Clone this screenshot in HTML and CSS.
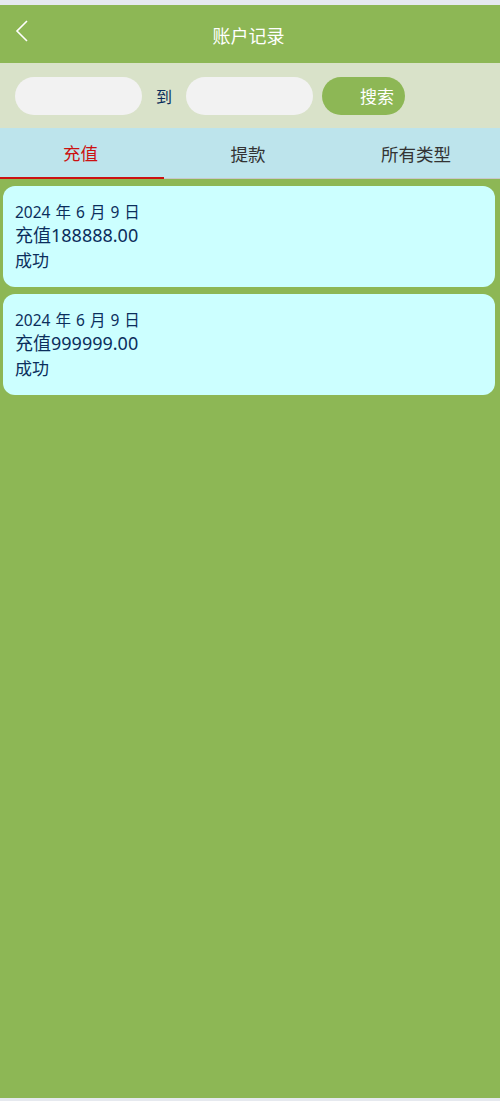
FILE: index.html
```html
<!DOCTYPE html>
<html lang="zh">
<head>
    <meta charset="UTF-8">
    <meta name="viewport" content="width=device-width, initial-scale=1.0">
    <title>账户记录</title>
    <link rel="stylesheet" href="styles.css">
</head>
<body>
    <div class="page">
        <div class="header">
            <span class="back">
                <svg width="14" height="24" viewBox="0 0 14 24"><path d="M12 2 L2 12 L12 22" fill="none" stroke="#fff" stroke-width="1.6"/></svg>
            </span>
            <h1>账户记录</h1>
        </div>

        <div class="filter">
            <input type="text" class="date-input">
            <span class="to">到</span>
            <input type="text" class="date-input">
            <button class="search-btn">搜索</button>
        </div>

        <div class="tabs">
            <div class="tab active">充值</div>
            <div class="tab">提款</div>
            <div class="tab">所有类型</div>
        </div>

        <div class="list">
            <div class="record">
                <div class="date">2024 年 6 月 9 日</div>
                <div class="amount">充值188888.00</div>
                <div class="status">成功</div>
            </div>
            <div class="record">
                <div class="date">2024 年 6 月 9 日</div>
                <div class="amount">充值999999.00</div>
                <div class="status">成功</div>
            </div>
        </div>
    </div>
</body>
</html>
```

FILE: styles.css
```css
html {
    background-color: #e6e9ef;
}

body {
    margin: 0;
    padding: 5px 0 0;
    font-family: "Noto Sans", "Noto Sans CJK SC", sans-serif;
}

.page {
    background-color: #8db755;
    min-height: 1093px;
}

.header {
    height: 58px;
    position: relative;
    display: flex;
    align-items: center;
    justify-content: center;
}

.header h1 {
    margin: 0 0 0 -3px;
    color: #fff;
    font-size: 18px;
    font-weight: normal;
    position: relative;
    top: 1px;
}

.back {
    position: absolute;
    left: 15px;
    top: 14px;
}

.filter {
    background-color: #d9e2c9;
    height: 65px;
    display: flex;
    align-items: center;
    padding: 0 15px;
    box-sizing: border-box;
}

.date-input {
    width: 127px;
    height: 38px;
    border: none;
    border-radius: 19px;
    background-color: #f2f2f2;
    outline: none;
    padding: 0;
}

.to {
    color: #0b2e5c;
    font-size: 16px;
    width: 44px;
    text-align: center;
}

.search-btn {
    margin-left: 9px;
    width: 83px;
    height: 38px;
    border: none;
    border-radius: 19px;
    background-color: #8db755;
    color: #fff;
    font-size: 17px;
    font-family: inherit;
    padding: 0 0 0 38px;
    text-align: left;
}

.tabs {
    display: flex;
    background-color: #bde4ec;
    height: 51px;
}

.tab {
    flex: 1;
    display: flex;
    align-items: center;
    justify-content: center;
    font-size: 17.5px;
    color: #333;
    border-bottom: 1px solid #c8c8c8;
}

.tab.active {
    flex: 0 0 164px;
    color: #cc1111;
    border-bottom: 2px solid #cc1111;
    padding-right: 3px;
    box-sizing: border-box;
}

.list {
    padding: 7px 5px 0 3px;
    display: flex;
    flex-direction: column;
    gap: 7px;
}

.record {
    background-color: #ccffff;
    border-radius: 12px;
    height: 101px;
    box-sizing: border-box;
    padding: 15px 12px 0;
    color: #0b2e5c;
}

.date {
    font-size: 15.5px;
    line-height: 22px;
    word-spacing: 1px;
}

.amount {
    font-size: 18px;
    line-height: 24px;
}

.status {
    font-size: 17px;
    line-height: 27px;
}
```
